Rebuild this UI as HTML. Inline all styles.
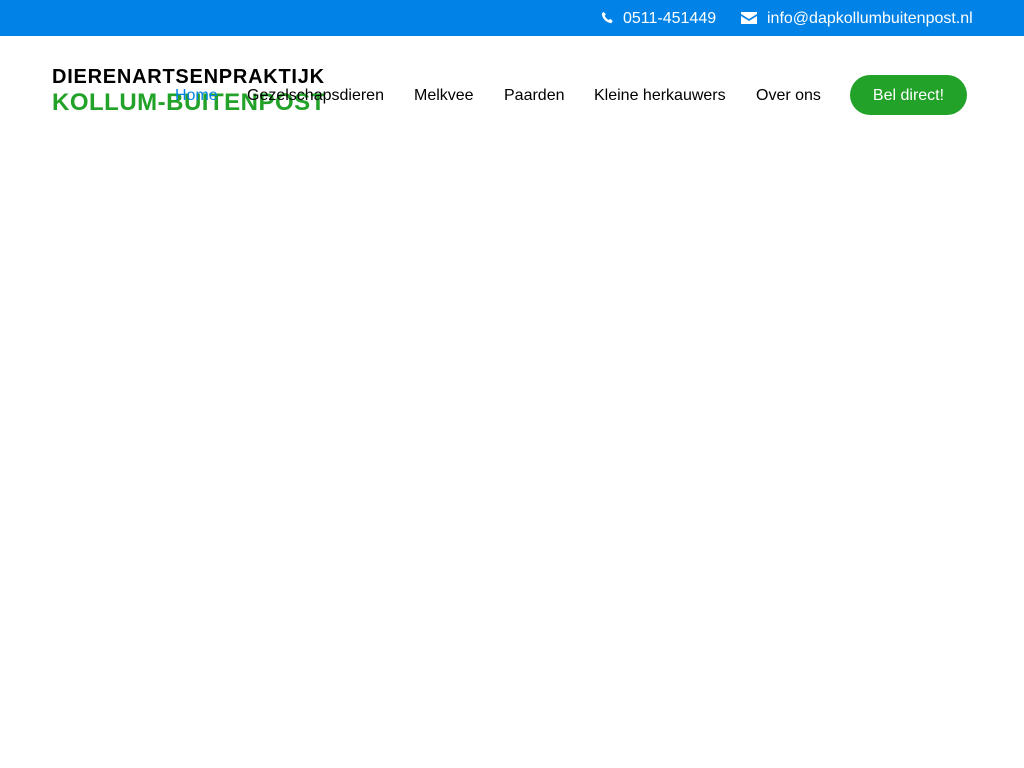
<!DOCTYPE html>
<html><head><style>
body{margin:0;background:#fff;font-family:"Liberation Sans",sans-serif;width:1024px;height:768px;position:relative;overflow:hidden}
.top{position:absolute;left:0;top:0;width:1024px;height:36px;background:#0082e6;color:#fff;font-size:16px}
.top span{position:absolute;top:9px;line-height:18px}
.l1{position:absolute;left:52px;top:66px;font-size:20px;font-weight:bold;color:#000;line-height:22px;letter-spacing:0.75px}
.l2{position:absolute;left:52px;top:90px;font-size:24px;font-weight:bold;color:#22a228;line-height:26px;letter-spacing:0.5px}
.nav{position:absolute;top:87px;font-size:16px;color:#000;line-height:18px}
.btn{position:absolute;left:850px;top:75px;width:117px;height:40px;border-radius:20px;background:#22a228;color:#fff;font-size:16px;text-align:center;line-height:41px}
</style></head><body>
<div class="top">
<svg style="position:absolute;left:601px;top:11px" width="13" height="13" viewBox="0 0 16 16"><path fill="#fff" d="M3 1l3 3-1.5 2c1 2 3 4 5 5L11.5 9.5l3 3-2 2.5C6 14 1 8.5 1 3z"/></svg>
<span style="left:623px;top:10px">0511-451449</span>
<svg style="position:absolute;left:741px;top:12px" width="16" height="12" viewBox="0 0 16 12"><path fill="#fff" d="M0 0h16v2L8 7 0 2z M0 4l8 5 8-5v8H0z"/></svg>
<span style="left:767px;top:10px">info@dapkollumbuitenpost.nl</span>
</div>
<div class="l1">DIERENARTSENPRAKTIJK</div>
<div class="l2">KOLLUM-BUITENPOST</div>
<div class="nav" style="left:175px;color:#0082e6">Home</div>
<div class="nav" style="left:247px">Gezelschapsdieren</div>
<div class="nav" style="left:414px">Melkvee</div>
<div class="nav" style="left:504px">Paarden</div>
<div class="nav" style="left:594px">Kleine herkauwers</div>
<div class="nav" style="left:756px">Over ons</div>
<div class="btn">Bel direct!</div>
</body></html>
